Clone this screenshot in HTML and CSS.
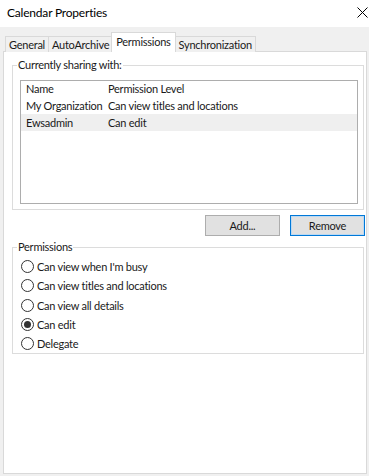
FILE: index.html
```html
<!DOCTYPE html>
<html lang="en">
<head>
  <meta charset="UTF-8" />
  <meta name="viewport" content="width=device-width, initial-scale=1.0" />
  <title>Calendar Properties</title>
  <link rel="stylesheet" href="styles.css">
</head>
<body>
  <div class="titlebar">
    <div class="title">Calendar Properties</div>
    <svg class="close" width="11" height="11" viewBox="0 0 11 11">
      <path d="M0.5 0.5 L10.5 10.5 M10.5 0.5 L0.5 10.5" stroke="#000" stroke-width="1" fill="none"/>
    </svg>
  </div>

  <div class="dialog">
    <div class="tabs">
      <div class="tab">General</div>
      <div class="tab">AutoArchive</div>
      <div class="tab active">Permissions</div>
      <div class="tab">Synchronization</div>
    </div>

    <div class="panel">
      <fieldset class="group sharing">
        <legend>Currently sharing with:</legend>
        <div class="listbox">
          <div class="row head"><span class="col-name">Name</span><span>Permission Level</span></div>
          <div class="row"><span class="col-name">My Organization</span><span>Can view titles and locations</span></div>
          <div class="row selected"><span class="col-name">Ewsadmin</span><span>Can edit</span></div>
        </div>
      </fieldset>

      <div class="buttons">
        <button class="btn">Add...</button>
        <button class="btn default">Remove</button>
      </div>

      <fieldset class="group perms">
        <legend>Permissions</legend>
        <div class="radio"><span class="dot"></span>Can view when I'm busy</div>
        <div class="radio"><span class="dot"></span>Can view titles and locations</div>
        <div class="radio"><span class="dot"></span>Can view all details</div>
        <div class="radio checked"><span class="dot"></span>Can edit</div>
        <div class="radio"><span class="dot"></span>Delegate</div>
      </fieldset>
    </div>
  </div>
</body>
</html>
```

FILE: styles.css
```css
* {
  margin: 0;
  padding: 0;
  box-sizing: border-box;
}

body {
  width: 369px;
  height: 476px;
  overflow: hidden;
  background: #f0f0f0;
  color: #1a1a1a;
  font-family: 'Lato', 'Noto Sans', sans-serif;
  font-size: 11px;
  letter-spacing: -0.25px;
  white-space: nowrap;
}

.titlebar {
  height: 27px;
  background: #fff;
  display: flex;
  align-items: center;
  justify-content: space-between;
  padding: 0 1px 3px 7px;
}

.title {
  font-size: 12px;
  letter-spacing: -0.2px;
  color: #000;
}

.dialog {
  padding: 6px 2px 2px 3px;
}

.tabs {
  display: flex;
  align-items: flex-end;
  height: 19px;
  padding-left: 2px;
  position: relative;
  z-index: 1;
  margin-bottom: -1px;
}

.tab {
  height: 16px;
  line-height: 15px;
  padding: 0 3px;
  background: #f0f0f0;
  border: 1px solid #d9d9d9;
  border-bottom: none;
  margin-right: -1px;
}

.tab.active {
  height: 20px;
  line-height: 17px;
  background: #fff;
  padding: 0 4px;
  margin: 0 -1px 0 -1px;
  position: relative;
}

.panel {
  background: #fff;
  border: 1px solid #d9d9d9;
  height: 423px;
  padding: 6px 3px 0 8px;
}

.group {
  border: 1px solid #dcdcdc;
  min-width: 0;
  padding-left: 4px;
}

.group legend {
  padding: 0 1px;
  line-height: 14px;
}

.sharing {
  padding: 8px 5px 5px 4px;
  width: 352px;
}

.listbox {
  height: 124px;
  margin-left: 3px;
  border: 1px solid #adadad;
  background: #fff;
}

.row {
  display: flex;
  height: 17px;
  line-height: 17px;
  padding-left: 5px;
}

.row.head {
  height: 16px;
  line-height: 16px;
}

.row.selected {
  background: #efefef;
}

.col-name {
  width: 82px;
}

.buttons {
  display: flex;
  justify-content: flex-end;
  gap: 10px;
  padding: 5px 0 0;
  margin-right: -2px;
}

.btn {
  width: 75px;
  height: 21px;
  font-family: inherit;
  font-size: 11px;
  letter-spacing: -0.25px;
  color: #1a1a1a;
  background: #e1e1e1;
  border: 1px solid #adadad;
}

.btn.default {
  border: 1px solid #0078d7;
  box-shadow: inset 0 0 0 1px #bcd9f2;
}

.perms {
  margin-top: 4px;
  padding: 3px 5px 0 4px;
  width: 352px;
}

.radio {
  display: flex;
  align-items: center;
  height: 19.3px;
  margin-left: 4px;
}

.dot {
  width: 13px;
  height: 13px;
  border: 1px solid #333;
  border-radius: 50%;
  margin-right: 3px;
  display: flex;
  align-items: center;
  justify-content: center;
}

.radio.checked .dot::after {
  content: '';
  width: 7px;
  height: 7px;
  border-radius: 50%;
  background: #333;
}
```
